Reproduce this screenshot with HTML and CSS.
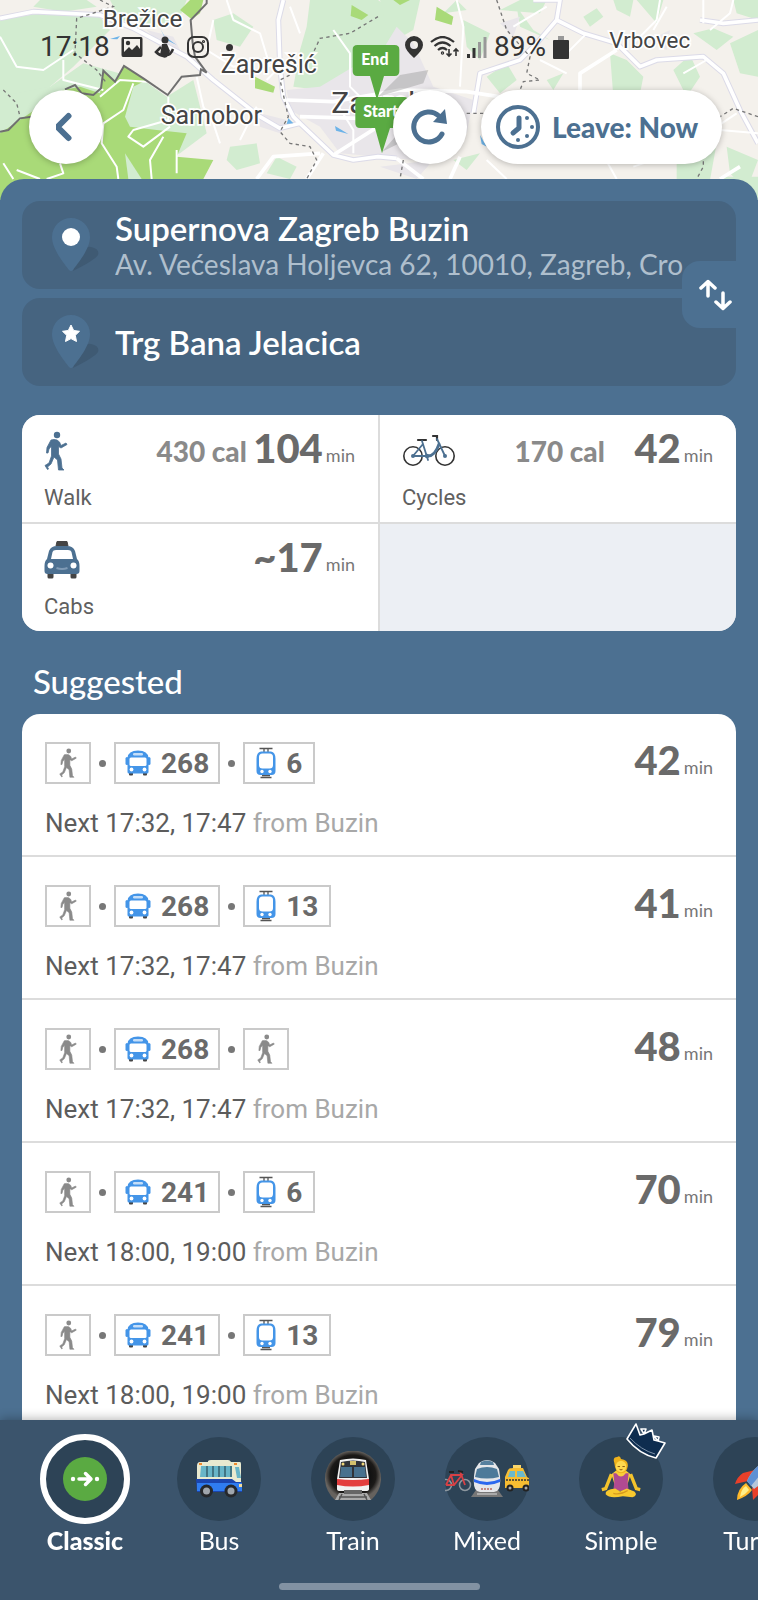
FILE: index.html
```html
<!DOCTYPE html>
<html lang="en">
<head>
    <meta charset="UTF-8">
    <meta name="viewport" content="width=device-width, initial-scale=1.0">
    <title>Trip to Trg Bana Jelacica</title>
    <link rel="stylesheet" href="styles.css">
</head>
<body>
    <!-- Icons used more than once -->
    <svg class="sprite" aria-hidden="true">
        <symbol id="icon-walk" viewBox="0 0 24 40">
            <circle cx="13" cy="4" r="3.2" fill="currentColor"/>
            <path d="M7 9 Q10 8 13 9 L15.500 11 L17 14.500 L22 12 L23 13.500 L17 17 L14.500 15.500 L14.500 23 L17 28 L18 37 L20 39 L14.500 39 L13.500 29 L10 26 L7 33 L3.500 36 L4.500 38 L3.500 38.500 L1 34.500 L2.500 33.500 L5 32 L7.500 25 L7.500 15 L5 18 L4 22 L2.500 22 L3 16.500 Z" fill="currentColor" stroke="currentColor" stroke-width="0.800" stroke-linejoin="round"/>
        </symbol>
        <symbol id="icon-bus" viewBox="0 0 26 26">
            <rect x="4" y="20" width="4" height="5.500" rx="1" fill="#444"/>
            <rect x="18" y="20" width="4" height="5.500" rx="1" fill="#444"/>
            <path d="M2.500 8 Q3 0.500 13 0.500 T23.500 8 V22 Q23.500 23.500 22 23.500 H4 Q2.500 23.500 2.500 22 Z" fill="#4495e8"/>
            <rect x="0.500" y="7" width="3" height="8" rx="1.500" fill="#4495e8"/>
            <rect x="22.500" y="7" width="3" height="8" rx="1.500" fill="#4495e8"/>
            <rect x="8" y="3" width="10" height="2.500" rx="1.200" fill="#c5def8"/>
            <rect x="4.500" y="7.500" width="17" height="8.500" rx="1.500" fill="#fff"/>
            <circle cx="6.500" cy="19.500" r="1.900" fill="#fff"/>
            <circle cx="19.500" cy="19.500" r="1.900" fill="#fff"/>
        </symbol>
        <symbol id="icon-tram" viewBox="0 0 20 32">
            <path d="M3.500 1.500 H16.500 M8 1.500 V5 M12 1.500 V5 M4.500 30.500 H15.500 M6 28.500 H14" stroke="#555" stroke-width="1.300" fill="none"/>
            <path d="M5 4.500 H15 Q19.500 5 19.500 12 V24 Q19.500 28 15.500 28 H4.500 Q0.500 28 0.500 24 V12 Q0.500 5 5 4.500 Z" fill="#4495e8"/>
            <rect x="3" y="6.500" width="14" height="15" rx="3.500" fill="#fff"/>
            <circle cx="6" cy="24.500" r="1.700" fill="#fff"/>
            <circle cx="14" cy="24.500" r="1.700" fill="#fff"/>
        </symbol>
        <symbol id="icon-pin" viewBox="0 0 48 56">
            <path d="M22 54 Q30 28 40 30 Q49 32 47 38 Q44 43 22 54 Z" fill="#3f5a73"/>
            <path d="M20 1 A19 19 0 0 1 39 20 C39 32 27 46 22 53 Q20 55 18 53 C13 46 1 32 1 20 A19 19 0 0 1 20 1 Z" fill="#4c7091"/>
        </symbol>
    </svg>

    <div class="app">
        <header class="top">
            <svg class="map" viewBox="0 0 2274 600" preserveAspectRatio="xMidYMin slice" role="img" aria-label="Map of Zagreb">
                <rect width="2274" height="600" fill="#f4f1ec"/>
                <g fill="#d2ecd0">
                    <path d="M0 60 L120 40 L300 50 L330 90 L220 200 L150 260 L40 330 L0 300 Z"/>
                    <path d="M120 0 L260 0 L290 20 L190 35 L100 20 Z"/>
                    <path d="M0 290 L150 260 L250 190 L430 240 L500 290 L580 240 L620 400 L540 460 L400 520 L0 400 Z"/>
                    <path d="M330 0 H560 L540 50 L470 80 L360 60 Z"/>
                    <path d="M640 60 L700 40 L760 80 L720 140 L650 120 Z"/>
                    <path d="M930 0 L1134 0 L1160 20 L1190 120 L1050 220 L960 270 L880 260 L900 150 L920 80 Z"/>
                    <path d="M1140 0 L1260 0 L1240 90 L1170 130 Z M1390 60 L1470 100 L1440 180 L1400 140 Z"/>
                    <path d="M690 440 L770 430 L780 490 L710 510 L680 480 Z M830 470 L890 500 L870 537 L800 520 Z"/>
                    <path d="M1500 30 L1560 0 L1640 0 L1620 40 Z M1550 20 L1600 90 L1650 120 L1560 80 Z"/>
                    <path d="M1830 160 L1880 180 L1930 230 L1910 330 L1840 290 Z M2020 210 L2070 165 L2100 230 L2060 290 Z"/>
                    <path d="M1750 50 L1790 25 L1810 50 L1770 80 Z M1840 0 H1900 L1890 50 L1850 30 Z"/>
                    <path d="M2080 100 L2140 85 L2200 110 L2150 150 Z M2190 130 L2274 90 V230 L2220 220 Z"/>
                    <path d="M2030 480 L2150 430 L2130 540 H2030 Z M2180 440 L2274 480 L2240 570 L2190 520 Z"/>
                    <path d="M1460 230 L1520 190 L1550 240 L1500 280 Z M1360 480 L1440 460 L1400 510 Z M1640 240 L1690 220 L1660 270 Z"/>
                    <path d="M1910 0 L1990 0 L1970 70 Z M2200 0 H2274 V60 L2210 40 Z M1330 40 L1370 0 L1400 30 Z"/>
                    <path d="M2160 530 H2274 V600 H2200 Z"/>
                </g>
                <g fill="#e9e6ea">
                    <path d="M860 270 L960 260 L1060 200 L1130 180 L1190 80 L1240 130 L1300 260 L1420 300 L1400 400 L1240 480 L1020 460 L960 380 L870 330 Z"/>
                    <path d="M440 90 L520 110 L540 150 L480 130 Z M780 340 L860 360 L840 400 L780 380 Z M1950 120 L2010 90 L2000 150 Z"/>
                    <path d="M1500 70 L1560 50 L1540 110 Z M1700 330 L1830 360 L1770 420 Z M1140 500 L1300 480 L1250 537 Z"/>
                </g>
                <g fill="#a9da78">
                    <path d="M0 400 L60 360 L190 270 L240 260 L300 280 L310 210 L345 245 L372 198 L440 240 L400 260 L375 350 L390 380 L470 390 L560 400 L530 470 L640 480 L610 537 L610 600 H0 Z"/>
                    <path d="M540 30 L570 0 L610 0 L600 40 L575 58 Z M765 230 L825 260 L820 278 L765 265 Z M1055 15 L1105 45 L1085 60 L1052 48 Z M1310 20 L1360 50 L1355 75 L1305 60 Z M1180 0 H1230 L1200 15 Z"/>
                </g>
                <path d="M375 460 L425 537 H385 Z" fill="#d2ecd0"/>
                <g fill="none" stroke="#dcdbe8" stroke-width="17" stroke-linejoin="round">
                    <path d="M0 55 L100 35 L300 45 L400 85 L560 170 L640 240 L780 350 L840 385 L900 370 L1000 465 L1060 480 L1134 470 L1190 475"/>
                    <path d="M850 0 L835 60 L840 200 L850 290 L880 350 L900 370"/>
                    <path d="M1600 0 L1680 0 L1670 60 L1610 130 L1560 180 L1440 220 L1420 340"/>
                    <path d="M2100 60 L2170 70 L2274 60 M1670 60 L1750 100 L1850 130 L1920 200 L1970 180 L2110 170 L2170 220 L2220 330 L2274 430"/>
                </g>
                <g fill="none" stroke="#fff" stroke-width="11" stroke-linejoin="round">
                    <path d="M0 55 L100 35 L300 45 L400 85 L560 170 L640 240 L780 350 L840 385 L900 370 L1000 465 L1060 480 L1134 470 L1190 475"/>
                    <path d="M850 0 L835 60 L840 200 L850 290 L880 350 L900 370"/>
                    <path d="M1600 0 L1680 0 L1670 60 L1610 130 L1560 180 L1440 220 L1420 340"/>
                    <path d="M2100 60 L2170 70 L2274 60 M1670 60 L1750 100 L1850 130 L1920 200 L1970 180 L2110 170 L2170 220 L2220 330 L2274 430"/>
                    <path d="M900 350 L1080 355 L1134 310 M860 300 L1000 305 L1200 270 L1400 275 L1560 300 M1000 465 L1134 380"/>
                    <path d="M960 460 L820 470 L770 537 M970 460 L920 537 M1190 475 L1270 537 M1380 470 L1350 537 M2220 500 L2160 537 M1740 280 L1740 220 L1850 150"/>
                </g>
                <g fill="none" stroke="#fff" stroke-width="6" stroke-linejoin="round">
                    <path d="M0 110 L50 200 L130 210 L220 150 M190 180 L190 240 L310 270 M300 290 L360 240 L440 245"/>
                    <path d="M400 250 L370 330 L310 370 L305 430 L350 500 L355 537 M505 290 L505 360 L400 390 L385 410 L430 440 L510 380 M490 410 L450 480 L455 537"/>
                    <path d="M590 230 L610 320 L640 370 L660 430 M530 450 L530 520 M10 490 L40 537 M50 510 L120 537 M180 490 L190 520 L140 537"/>
                    <path d="M640 60 L620 150 L700 200 L790 180 M680 0 L700 60 L780 100 L810 200 M870 20 L900 100 M1000 90 L1050 160 L1050 260 L1090 300"/>
                    <path d="M1370 0 L1390 80 L1380 260 M1500 400 L1600 460 L1700 440 M1460 480 L1520 537 M1790 430 L1850 537 M1760 100 L1700 160 M1980 0 L1970 60 L1900 130"/>
                    <path d="M2110 70 L2110 0 M2000 20 L1960 90 M2200 0 L2190 40 L2130 90 M1620 180 L1700 220 M2120 180 L2050 220 M2210 340 L2120 400 M1640 20 L1540 80"/>
                    <path d="M720 420 L770 320 M1010 310 L1060 390 L1060 460 M800 240 L840 200 M1900 500 L1990 470 M2160 390 L2274 400"/>
                </g>
                <g fill="none" stroke="#777" stroke-width="4" stroke-dasharray="10 10">
                    <path d="M300 0 L340 20 L230 55 L225 160 L290 210 L320 250 M10 270 L50 310 L60 350"/>
                    <path d="M1134 50 L1050 100 L960 115 L920 200 L840 240 L865 350 L840 395 L870 430 L930 440 L950 480 L920 537"/>
                    <path d="M1490 0 L1520 90 L1590 170 L1580 220 L1620 240 L1570 245 L1560 270 M1450 340 L1400 340 M1210 480 L1200 537 M2274 350 L2200 325 L2160 350 L2110 400 L2110 500 L2090 537"/>
                </g>
                <path d="M0 395 L25 390 L60 355 L95 350 M195 268 L225 255 L245 280 L280 285 L303 265 L310 212 L345 245 L372 198 L430 235 L503 285 L545 230 L600 225 L603 208 L620 218 L585 170 L578 130 L572 60 L620 10 L620 0" fill="none" stroke="#707070" stroke-width="6"/>
                <path d="M330 117 L360 108 L352 118 Z M480 85 L492 108 L530 135 L500 120 Z M1005 378 L1045 402 L1008 392 Z M865 355 L880 370 L860 372 Z M1440 405 L1460 440 L1445 432 Z" fill="#6db3e8"/>
                <g class="map-labels">
                    <text x="308" y="80" font-size="73">Brežice</text>
                    <text x="662" y="218" font-size="75">Zaprešić</text>
                    <text x="482" y="371" font-size="75">Samobor</text>
                    <text x="1828" y="145" font-size="67">Vrbovec</text>
                    <text x="994" y="339" font-size="90">Zagreb</text>
                </g>
                <path d="M1134 290 L1200 225 L1285 210 L1270 250 Z M1146 455 L1230 360 L1260 400 Z" fill="#888" opacity="0.350"/>
                <g fill="#5aaa42">
                    <path d="M1072 135 H1184 Q1198 135 1198 149 V214 Q1198 228 1184 228 H1152 L1131 300 L1110 228 H1072 Q1058 228 1058 214 V149 Q1058 135 1072 135 Z"/>
                    <path d="M1080 291 H1212 Q1226 291 1226 305 V370 Q1226 384 1212 384 H1170 L1146 460 L1125 384 H1080 Q1066 384 1066 370 V305 Q1066 291 1080 291 Z"/>
                </g>
                <g class="flag-labels">
                    <text x="1084" y="196">End</text>
                    <text x="1090" y="352">Start</text>
                </g>
            </svg>

            <div class="status">
                <span class="clock">17:18</span>
                <svg class="status-icon" viewBox="0 0 22 22"><path d="M2 1 H20 Q21.500 1 21.500 3 V19 Q21.500 21 20 21 H2 Q0.500 21 0.500 19 V3 Q0.500 1 2 1 Z M3 3 V16 L8 11 L11 14 L16 9 L19 13 V3 Z" fill="#333" fill-rule="evenodd"/><circle cx="7" cy="7" r="2.200" fill="#333"/></svg>
                <svg class="status-icon" viewBox="0 0 22 22"><circle cx="11" cy="4" r="3.500" fill="#333"/><path d="M8 8 H13 L16 15 L13 21 Q9 23 6 19 Z" fill="#333"/><path d="M7 11 L2 16 Q7 21 12 19 Q17 19 19 13" fill="none" stroke="#333" stroke-width="2.500"/></svg>
                <svg class="status-icon" viewBox="0 0 22 22" fill="none" stroke="#333" stroke-width="2"><rect x="1" y="1" width="20" height="20" rx="6"/><circle cx="11" cy="11" r="5"/><circle cx="16.500" cy="5.500" r="0.600"/></svg>
                <span class="status-dot"></span>
                <span class="status-right">
                    <svg width="18" height="22" viewBox="0 0 18 22"><path d="M9 0 A9 9 0 0 1 18 9 Q18 14 9 22 Q0 14 0 9 A9 9 0 0 1 9 0 Z M9 5 A4 4 0 1 0 9 13 A4 4 0 1 0 9 5 Z" fill="#333" fill-rule="evenodd"/></svg>
                    <svg width="30" height="22" viewBox="0 0 30 22" fill="none" stroke="#333" stroke-width="2.200"><path d="M1 6 Q12.500 -4 24 6 M4.500 10 Q12.500 3 20.500 10 M8 14 Q12.500 10 17 14"/><circle cx="12.500" cy="17" r="0.600"/><path d="M19 13 V20 M16.500 17.500 L19 20 L21.500 17.500 M26 20 V13 M23.500 15.500 L26 13 L28.500 15.500" stroke-width="1.600"/></svg>
                    <svg width="20" height="22" viewBox="0 0 20 22"><path d="M0 18 H3 V22 H0 Z M5.500 12 H8.500 V22 H5.500 Z" fill="#333"/><path d="M11 6 H14 V22 H11 Z M16.500 1 H19.500 V22 H16.500 Z" fill="#999"/></svg>
                    <span class="clock">89%</span>
                    <svg width="16" height="23" viewBox="0 0 16 23"><path d="M5 0 H11 V4 H5 Z" fill="#999"/><rect y="4" width="16" height="19" rx="1" fill="#333"/></svg>
                </span>
            </div>

            <div class="map-buttons">
                <button class="round-btn" type="button" aria-label="Back">
                    <svg width="20" height="30" viewBox="3 0 20 30"><path d="M15.500 4 L4.500 15 L15.500 26" fill="none" stroke="#4c7091" stroke-width="6" stroke-linecap="round" stroke-linejoin="round" overflow="visible"/></svg>
                </button>
                <button class="round-btn refresh" type="button" aria-label="Refresh">
                    <svg width="38" height="38" viewBox="0 0 38 38"><path d="M31 26 A15 15 0 1 1 28 8" fill="none" stroke="#4c7091" stroke-width="5" stroke-linecap="round"/><path d="M34 1 L36 16 L22 14 Z" fill="#4c7091"/></svg>
                </button>
                <button class="leave-btn" type="button">
                    <svg width="44" height="44" viewBox="0 0 44 44"><circle cx="22" cy="22" r="20" fill="none" stroke="#4c7091" stroke-width="4"/><path d="M23 13 V23 L17 28" fill="none" stroke="#4c7091" stroke-width="5" stroke-linecap="round" stroke-linejoin="round"/><g fill="#4c7091"><circle cx="31" cy="13" r="2"/><circle cx="36" cy="22" r="2"/><circle cx="31" cy="31" r="2"/><circle cx="22" cy="35" r="2"/></g></svg>
                    Leave: Now
                </button>
            </div>
        </header>

        <main class="panel">
            <section class="places">
                <button class="place" type="button">
                    <span class="pin">
                        <svg width="48" height="56"><use href="#icon-pin"/><circle cx="20" cy="20" r="9" fill="#fff"/></svg>
                    </span>
                    <span class="place-text">
                        <span class="place-name">Supernova Zagreb Buzin</span>
                        <span class="place-address">Av. Većeslava Holjevca 62, 10010, Zagreb, Cro</span>
                    </span>
                </button>
                <button class="place" type="button">
                    <span class="pin">
                        <svg width="48" height="56"><use href="#icon-pin"/><path d="M20 11 L22.700 16.500 L28.500 17.300 L24.300 21.300 L25.500 27.500 L20 24.600 L14.500 27.500 L15.700 21.300 L11.500 17.300 L17.300 16.500 Z" fill="#fff" stroke="#fff" stroke-linejoin="round"/></svg>
                    </span>
                    <span class="place-text">
                        <span class="place-name">Trg Bana Jelacica</span>
                    </span>
                </button>
                <button class="swap" type="button" aria-label="Swap start and end">
                    <svg width="34" height="32" viewBox="0 0 34 32" fill="none" stroke="#fff" stroke-width="3.500" stroke-linecap="round" stroke-linejoin="round"><path d="M10 17 V3 M3 9 L10 2.500 L17 9 M25 14 V28 M18 23 L25 29.500 L32 23"/></svg>
                </button>
            </section>

            <section class="modes">
                <a class="mode" href="#walk">
                    <span class="mode-row">
                        <svg class="mode-icon walk" width="24" height="40"><use href="#icon-walk"/></svg>
                        <span class="cal">430 cal</span>
                        <span class="time">104</span><span class="min">min</span>
                    </span>
                    <span class="mode-name">Walk</span>
                </a>
                <a class="mode" href="#cycles">
                    <span class="mode-row">
                        <svg class="mode-icon" width="54" height="40" viewBox="0 0 54 40" fill="none" stroke-linecap="round">
                            <g stroke="#333" stroke-width="1.600"><circle cx="11" cy="25" r="9.200"/><circle cx="43" cy="25" r="9.200"/></g>
                            <path d="M16 9 H24 M31 5 H35 V9" stroke="#333" stroke-width="2.200"/>
                            <path d="M11 25 L21 13 M20 10 L26 29 M11 25 H28 M35 8 L43 25" stroke="#4c7091" stroke-width="1.800"/>
                            <path d="M26 25 Q33 25 37 13" stroke="#4c7091" stroke-width="2.800"/>
                            <g fill="#4c7091"><circle cx="11" cy="25" r="2"/><circle cx="25" cy="25" r="2.200"/><circle cx="43" cy="25" r="2"/></g>
                        </svg>
                        <span class="cal">170 cal</span>
                        <span class="time">42</span><span class="min">min</span>
                    </span>
                    <span class="mode-name">Cycles</span>
                </a>
                <a class="mode" href="#cabs">
                    <span class="mode-row">
                        <svg class="mode-icon" width="36" height="38" viewBox="0 0 36 38">
                            <path d="M13 0.500 H23 L24 5 H12 Z" fill="#444" stroke="#444" stroke-linejoin="round"/>
                            <rect x="3.500" y="29" width="6" height="8.500" rx="1.500" fill="#444"/><rect x="26.500" y="29" width="6" height="8.500" rx="1.500" fill="#444"/>
                            <path d="M3 18 L5 10 Q7 5 13 5 H23 Q29 5 31 10 L33 18 Q35.500 20 35.500 25 V30 Q35.500 33 32.500 33 H3.500 Q0.500 33 0.500 30 V25 Q0.500 20 3 18 Z" fill="#4c7091"/>
                            <path d="M7 18 L8.500 11 Q9 9 12 9 H24 Q27 9 27.500 11 L29 18 Z" fill="#fff"/>
                            <circle cx="6.500" cy="24.500" r="3" fill="#fff"/><circle cx="29.500" cy="24.500" r="3" fill="#fff"/>
                            <path d="M12.500 27 Q18 29 23.500 27" fill="none" stroke="#7f9ab5" stroke-width="2"/>
                        </svg>
                        <span class="time">~17</span><span class="min">min</span>
                    </span>
                    <span class="mode-name">Cabs</span>
                </a>
                <div class="mode-empty"></div>
            </section>

            <h2>Suggested</h2>

            <section class="routes">
                <a class="route" href="#route-1">
                    <span class="route-row">
                        <span class="chip walk-chip"><svg width="20" height="30"><use href="#icon-walk"/></svg></span>
                        <span class="sep"></span>
                        <span class="chip"><svg width="26" height="26"><use href="#icon-bus"/></svg>268</span>
                        <span class="sep"></span>
                        <span class="chip tram-chip"><svg width="20" height="32"><use href="#icon-tram"/></svg>6</span>
                        <span class="time">42</span><span class="min">min</span>
                    </span>
                    <span class="next">Next 17:32, 17:47 <span class="from">from Buzin</span></span>
                </a>
                <a class="route" href="#route-2">
                    <span class="route-row">
                        <span class="chip walk-chip"><svg width="20" height="30"><use href="#icon-walk"/></svg></span>
                        <span class="sep"></span>
                        <span class="chip"><svg width="26" height="26"><use href="#icon-bus"/></svg>268</span>
                        <span class="sep"></span>
                        <span class="chip tram-chip"><svg width="20" height="32"><use href="#icon-tram"/></svg>13</span>
                        <span class="time">41</span><span class="min">min</span>
                    </span>
                    <span class="next">Next 17:32, 17:47 <span class="from">from Buzin</span></span>
                </a>
                <a class="route" href="#route-3">
                    <span class="route-row">
                        <span class="chip walk-chip"><svg width="20" height="30"><use href="#icon-walk"/></svg></span>
                        <span class="sep"></span>
                        <span class="chip"><svg width="26" height="26"><use href="#icon-bus"/></svg>268</span>
                        <span class="sep"></span>
                        <span class="chip walk-chip"><svg width="20" height="30"><use href="#icon-walk"/></svg></span>
                        <span class="time">48</span><span class="min">min</span>
                    </span>
                    <span class="next">Next 17:32, 17:47 <span class="from">from Buzin</span></span>
                </a>
                <a class="route" href="#route-4">
                    <span class="route-row">
                        <span class="chip walk-chip"><svg width="20" height="30"><use href="#icon-walk"/></svg></span>
                        <span class="sep"></span>
                        <span class="chip"><svg width="26" height="26"><use href="#icon-bus"/></svg>241</span>
                        <span class="sep"></span>
                        <span class="chip tram-chip"><svg width="20" height="32"><use href="#icon-tram"/></svg>6</span>
                        <span class="time">70</span><span class="min">min</span>
                    </span>
                    <span class="next">Next 18:00, 19:00 <span class="from">from Buzin</span></span>
                </a>
                <a class="route" href="#route-5">
                    <span class="route-row">
                        <span class="chip walk-chip"><svg width="20" height="30"><use href="#icon-walk"/></svg></span>
                        <span class="sep"></span>
                        <span class="chip"><svg width="26" height="26"><use href="#icon-bus"/></svg>241</span>
                        <span class="sep"></span>
                        <span class="chip tram-chip"><svg width="20" height="32"><use href="#icon-tram"/></svg>13</span>
                        <span class="time">79</span><span class="min">min</span>
                    </span>
                    <span class="next">Next 18:00, 19:00 <span class="from">from Buzin</span></span>
                </a>
            </section>
        </main>

        <nav class="tabs">
            <div class="tab-list">
                <button class="tab active" type="button">
                    <span class="tab-icon">
                        <svg width="44" height="44" viewBox="0 0 44 44"><circle cx="22" cy="22" r="22" fill="#5aaa42"/><circle cx="10" cy="22" r="2.200" fill="#fff"/><circle cx="34" cy="22" r="2.200" fill="#fff"/><path d="M16 22 H27 M22.500 16.500 L28 22 L22.500 27.500" fill="none" stroke="#fff" stroke-width="3.500" stroke-linecap="round" stroke-linejoin="round"/></svg>
                    </span>
                    Classic
                </button>
                <button class="tab" type="button">
                    <span class="tab-icon">
                        <svg width="46" height="38" viewBox="0 0 46 38">
                            <path d="M12 1 Q13 0 15 0 H32 Q34 0 35 2 H44 Q45 2 45 4 V21 L46 27 V32 H1 V6 Q1 2 4 2 H12 Z" fill="#e9ead0"/>
                            <path d="M5 6 H36 V17 H4 Z M39 7 H43 L45 18 H41 Z" fill="#68b5c8"/>
                            <path d="M11 6 V17 M17 6 V17 M23 6 V17 M29 6 V17 M35 6 V17" stroke="#35606e" stroke-width="1.500"/>
                            <path d="M0 19 H36 L40 22 H46 V32 H1 Z" fill="#1b45ae"/><path d="M1 23 H46 V31 H1 Z" fill="#2f7cf0"/>
                            <path d="M3 3 H6 V5 H3 Z M38 3 H41 V5 H38 Z" fill="#f08a2c"/>
                            <circle cx="10.500" cy="31" r="6.500" fill="#26282b"/><circle cx="35" cy="31" r="6.500" fill="#26282b"/>
                            <circle cx="10.500" cy="31" r="3.500" fill="#a0a6ad"/><circle cx="35" cy="31" r="3.500" fill="#a0a6ad"/>
                            <path d="M43 24 H46 V27 H43 Z" fill="#f4dc9c"/>
                        </svg>
                    </span>
                    Bus
                </button>
                <button class="tab" type="button">
                    <span class="tab-icon">
                        <svg width="56" height="56" viewBox="0 -2 56 56">
                            <defs><radialGradient id="tunnel"><stop offset="0" stop-color="#888"/><stop offset="0.600" stop-color="#111"/><stop offset="0.820" stop-color="#1c1a18"/><stop offset="1" stop-color="#66625e"/></radialGradient></defs>
                            <path d="M10 47 A28 28 0 1 1 46 47 Z" fill="url(#tunnel)"/>
                            <path d="M14 40 H42 L46 47 H10 Z" fill="#aaa"/><path d="M17 41 L14 47 M39 41 L42 47 M14 44 H42" stroke="#555" stroke-width="1.500"/>
                            <path d="M15 7 Q28 4 41 7 L44 26 V36 Q44 38 41 38 H15 Q12 38 12 36 V26 Z" fill="#f2f2f2"/>
                            <path d="M16 9 Q28 6 40 9 L42 25 H14 Z" fill="#303338"/>
                            <path d="M16 14 H27 V24 H15 Z M29 14 H40 L41 24 H29 Z" fill="#48718e"/>
                            <path d="M25 8 H31 V12 H25 Z" fill="#d5c16c"/><circle cx="18" cy="11" r="1.500" fill="#f0d77a"/><circle cx="38" cy="11" r="1.500" fill="#f0d77a"/>
                            <path d="M12 26 Q28 28 44 26 V32 Q28 35 12 32 Z" fill="#e33d3d"/>
                            <path d="M19 37 H37 V41 H19 Z" fill="#666"/>
                        </svg>
                    </span>
                    Train
                </button>
                <button class="tab" type="button">
                    <span class="tab-icon">
                        <svg width="84" height="38" viewBox="0 0 84 38">
                            <g fill="none" stroke="#8d979f" stroke-width="1.500"><circle cx="1" cy="25" r="5.500"/><circle cx="20" cy="25" r="5.500"/></g>
                            <path d="M1 25 L6 15 H17 L9 25 H1 M6 15 L9 25 M20 25 L15 11" fill="none" stroke="#d74145" stroke-width="1.800"/><path d="M4 12 H9 M13 11 L18 12" stroke="#222" stroke-width="1.800"/>
                            <path d="M31 30 H53 L58 37 H26 Z" fill="#777"/><path d="M32 34 H52" stroke="#bbb" stroke-width="1.500"/>
                            <path d="M34 3 Q42 -3 50 3 L54 9 Q58 32 49 32 H35 Q26 32 30 9 Z" fill="#e6e7ea"/>
                            <path d="M36 2 Q42 -1 48 2 L49 5 H35 Z" fill="#57809e"/>
                            <path d="M32 9 Q42 5 52 9 L54 17 Q42 20 30 17 Z" fill="#4d7a9a"/>
                            <path d="M29 19 Q42 25 55 19 V22 Q42 28 29 22 Z" fill="#2c68ef"/>
                            <path d="M36 29 H48" stroke="#b96b64" stroke-width="1.500" stroke-dasharray="2 1"/>
                            <path d="M60 17 L63 10 Q64 8 68 8 H78 L82 17 L85 19 V28 H60 Z" fill="#f7bd32"/><path d="M63 17 L65 11 H70 V17 Z M72 11 H78 L81 17 H72 Z" fill="#6bb9cb"/><path d="M68 5 H76 V8 H68 Z" fill="#f9d66c"/>
                            <path d="M61 20 H84" stroke="#333" stroke-width="1.500" stroke-dasharray="2 1"/>
                            <circle cx="65" cy="28" r="3.500" fill="#222"/><circle cx="81" cy="28" r="3.500" fill="#222"/><circle cx="65" cy="28" r="1.500" fill="#aaa"/><circle cx="81" cy="28" r="1.500" fill="#aaa"/>
                        </svg>
                    </span>
                    Mixed
                </button>
                <button class="tab" type="button">
                    <span class="tab-icon">
                        <svg width="40" height="46" viewBox="0 0 40 48">
                            <path d="M10 19 L4 34 L0 35 M30 19 L36 34 L40 35" fill="none" stroke="#f4c32c" stroke-width="3.500"/>
                            <path d="M15 15 H25 L30 19 L27 29 V36 H13 V29 L10 19 Z" fill="#f8cc3b"/>
                            <path d="M12 18 H15 Q20 25 25 18 H28 L27 27 L28 36 H12 L13 27 Z" fill="#b04a91"/>
                            <path d="M14 34 Q3 35 4 40 Q8 45 22 42 L32 43 Q38 41 34 37 L26 34 L19 37 Z" fill="#f8c92e"/><path d="M12 39 Q19 41 27 36" fill="none" stroke="#d69a1d" stroke-width="1.300"/>
                            <path d="M13 7 Q11 1 16 1 Q19 -1 20 3 Q28 4 27 11 Q26 18 20 18 Q14 18 13 7 Z" fill="#efb21c"/>
                            <ellipse cx="20" cy="11" rx="5.500" ry="6" fill="#ffd94e"/><path d="M16.500 11 H19 M21.500 11 H24 M18.500 14 Q20 15 21.500 14" stroke="#87550d" fill="none"/>
                        </svg>
                    </span>
                    <svg class="crown" width="40" height="36" viewBox="0 0 40 36"><path d="M10 1 L14 12 L18 11 L15 6 L20 6 L18 11 L26 7 L28 17 L32 18 L28 13 L33 14 L32 18 L39 20 L30 35 Q13 31 1 16 Z" fill="#0e2d4f" stroke="#fff" stroke-width="1.600" stroke-linejoin="round"/><path d="M4 15 Q15 27 29 31" fill="none" stroke="#7c91a8"/></svg>
                    Simple
                </button>
                <button class="tab" type="button">
                    <span class="tab-icon">
                        <svg width="40" height="42" viewBox="0 0 40 42">
                            <path d="M8 15 L20 12 L13 23 L0 26 Q2 19 8 15 Z M28 23 L26 34 L18 42 L17 30 Z" fill="#e8402a"/>
                            <path d="M11 25 L17 32 Q13 38 2 42 Q2 31 11 25 Z" fill="#ffb92a"/><path d="M11 28 L14 32 Q11 36 5 39 Q6 31 11 28 Z" fill="#fff08b"/>
                            <path d="M12 23 Q20 5 39 0 Q38 18 19 31 Z" fill="#b5c6db"/><path d="M12 23 Q20 5 39 0 L16 28 Z" fill="#5e90d4"/><circle cx="26" cy="13" r="3" fill="#243e60"/>
                        </svg>
                    </span>
                    Turbo
                </button>
            </div>
            <div class="home-bar"></div>
        </nav>
    </div>
</body>
</html>
```
FILE: styles.css
```css
* {
    box-sizing: border-box;
}
body {
    margin: 0;
    font-family: Lato, 'Open Sans', sans-serif;
    background: #4c7091;
}
button {
    border: none;
    padding: 0;
    font-family: inherit;
    cursor: pointer;
}
a {
    color: inherit;
    text-decoration: none;
}
svg {
    display: block;
    flex: none;
}
.sprite {
    position: absolute;
    width: 0;
    height: 0;
}
.app {
    display: flex;
    flex-direction: column;
    height: 100vh;
    overflow: hidden;
}

/* Map and the controls over it */
.top {
    position: relative;
    height: 179px;
    flex: none;
}
.map {
    position: absolute;
    top: 0;
    left: 0;
    width: 100%;
    height: 200px;
}
.map-labels {
    font-family: Roboto, sans-serif;
    fill: #444;
    stroke: #fff;
    stroke-width: 10px;
    paint-order: stroke;
}
.flag-labels {
    font-size: 48px;
    font-weight: 900;
    fill: #fff;
}
.status {
    position: relative;
    display: flex;
    align-items: center;
    gap: 11px;
    padding: 30px 189px 0 40px;
    height: 64px;
}
.clock {
    font-family: Roboto, sans-serif;
    font-size: 28px;
    line-height: 34px;
    color: #333;
}
.status-icon {
    width: 22px;
    height: 22px;
}
.status-dot {
    width: 7px;
    height: 7px;
    margin-left: 6px;
    border-radius: 50%;
    background: #333;
}
.status-right {
    display: flex;
    align-items: center;
    gap: 7px;
    margin-left: auto;
}
.map-buttons {
    position: relative;
    display: flex;
    gap: 14px;
    padding: 26px 36px 0 29px;
}
.round-btn, .leave-btn {
    display: flex;
    align-items: center;
    justify-content: center;
    height: 74px;
    border-radius: 37px;
    background: #fff;
    box-shadow: 0 1px 6px rgba(0, 0, 0, 0.25);
}
.round-btn {
    width: 74px;
}
.refresh {
    margin-left: auto;
}
.leave-btn {
    justify-content: flex-start;
    gap: 12px;
    width: 241px;
    padding-left: 15px;
    font-size: 28px;
    font-weight: 900;
    color: #4c7091;
}

/* Blue sheet */
.panel {
    position: relative;
    flex: 1;
    min-height: 0;
    overflow-y: auto;
    scrollbar-width: none;
    padding: 22px 22px 0;
    border-radius: 24px 24px 0 0;
    background: #4c7091;
}
.places {
    position: relative;
    display: flex;
    flex-direction: column;
    gap: 9px;
    margin-bottom: 29px;
}
.place {
    display: flex;
    align-items: center;
    height: 88px;
    padding: 0 50px 0 29px;
    border-radius: 18px;
    background: #466480;
    color: #fff;
    text-align: left;
}
.pin {
    width: 64px;
}
.place-text {
    flex: 1;
    min-width: 0;
}
.place-name, .place-address {
    display: block;
    white-space: nowrap;
    overflow: hidden;
}
.place-name {
    font-size: 33px;
    line-height: 38px;
    font-weight: 600;
}
.place-address {
    font-size: 28px;
    line-height: 34px;
    color: #afbfcd;
}
.swap {
    position: absolute;
    right: 0;
    top: 60px;
    width: 54px;
    height: 67px;
    padding-left: 16px;
    border-radius: 18px 0 0 18px;
    background: #4c7091;
}

/* Walk, cycle, cab */
.modes {
    display: grid;
    grid-template-columns: 1fr 1fr;
    gap: 2px;
    border-radius: 18px;
    background: #dcdcdc;
    overflow: hidden;
}
.mode {
    height: 107px;
    padding: 15px 23px 0 22px;
    background: #fff;
}
.mode-empty {
    background: #eceff4;
}
.mode-row, .route-row {
    display: flex;
    align-items: center;
    height: 42px;
}
.mode-icon {
    margin-right: auto;
}
.walk {
    color: #4c7091;
}
.cal {
    font-size: 28px;
    font-weight: 900;
    color: #8a8a8a;
}
.time {
    align-self: flex-start;
    min-width: 76px;
    text-align: right;
    font-size: 40px;
    line-height: 36px;
    font-weight: 900;
    color: #6a6a6a;
}
.min {
    align-self: flex-start;
    margin-left: 3px;
    font-size: 18px;
    line-height: 50px;
    color: #777;
}
.mode-name {
    display: block;
    margin-top: 12px;
    font-family: Roboto, sans-serif;
    font-size: 22px;
    line-height: 28px;
    color: #606060;
}

/* Suggested routes */
h2 {
    margin: 29px 11px 12px;
    font-size: 33px;
    line-height: 42px;
    font-weight: 500;
    color: #fff;
}
.routes {
    border-radius: 18px 18px 0 0;
    background: #fff;
}
.route {
    display: block;
    height: 143px;
    padding: 28px 23px 0;
    border-bottom: 2px solid #dcdcdc;
}
.chip {
    display: flex;
    align-items: center;
    gap: 10px;
    height: 42px;
    padding: 0 9px;
    border: 2px solid #cacaca;
    font-family: Roboto, sans-serif;
    font-size: 28px;
    font-weight: 700;
    color: #6a6a6a;
}
.walk-chip {
    padding: 0 11px;
    color: #8a8a8a;
}
.tram-chip {
    padding: 0 11px;
}
.sep {
    width: 7px;
    height: 7px;
    margin: 0 8px;
    border-radius: 50%;
    background: #777;
}
.route .time {
    margin-left: auto;
}
.next {
    display: block;
    margin-top: 22px;
    font-family: Roboto, sans-serif;
    font-size: 26px;
    line-height: 34px;
    color: #5c5c5c;
}
.from {
    color: #a8a8a8;
}

/* Bottom tabs */
.tabs {
    position: relative;
    flex: none;
    height: 180px;
    padding-top: 14px;
    background: #3b546c;
    box-shadow: 0 -1px 10px rgba(0, 0, 0, 0.3);
}
.tab-list {
    display: flex;
    padding-left: 18px;
}
.tab {
    position: relative;
    flex: none;
    display: flex;
    flex-direction: column;
    align-items: center;
    width: 134px;
    background: none;
    font-size: 25px;
    line-height: 32px;
    color: #fff;
}
.tab-icon {
    display: flex;
    align-items: center;
    justify-content: center;
    width: 84px;
    height: 84px;
    margin: 3px 0;
    border-radius: 50%;
    background: #2d4356;
}
.active {
    font-weight: 900;
}
.active .tab-icon {
    width: 90px;
    height: 90px;
    margin: 0;
    border: 6px solid #fff;
}
.crown {
    position: absolute;
    top: -11px;
    left: 72px;
}
.home-bar {
    width: 201px;
    height: 7px;
    margin: 27px auto 0;
    border-radius: 4px;
    background: #8292a3;
}
```
